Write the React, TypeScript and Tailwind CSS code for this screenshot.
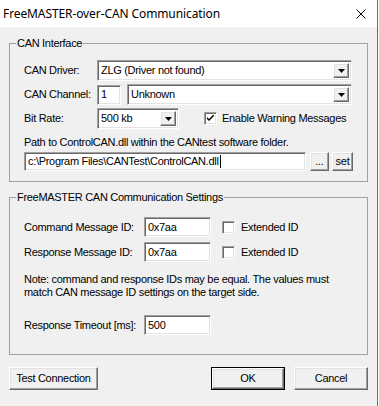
import React from "react";

const ui = "font-['Liberation_Sans',Arial,sans-serif] text-[11px] leading-[13px] tracking-[-0.3px] text-black";

const sunken =
  "bg-white border border-t-[#a0a0a0] border-l-[#a0a0a0] border-b-white border-r-white shadow-[inset_1px_1px_0_#696969,inset_-1px_-1px_0_#e3e3e3]";

const raised =
  "bg-[#f0f0f0] border border-t-white border-l-white border-b-[#696969] border-r-[#696969] shadow-[inset_-1px_-1px_0_#a0a0a0,inset_1px_1px_0_#e3e3e3]";

function Edit({ value, className, caret }: { value: string; className: string; caret?: boolean }) {
  return (
    <div className={`${sunken} ${className} flex items-center pl-[3px] overflow-hidden whitespace-nowrap`}>
      <span>{value}</span>
      {caret && <span className="ml-px inline-block h-[13px] w-px bg-black" />}
    </div>
  );
}

function Combo({ value, className }: { value: string; className: string }) {
  return (
    <div className={`${sunken} ${className} flex items-center p-[2px]`}>
      <span className="flex-1 pl-[1px] whitespace-nowrap overflow-hidden">{value}</span>
      <span className={`${raised} flex h-full w-[16px] items-center justify-center`}>
        <svg width="7" height="4" viewBox="0 0 7 4">
          <path d="M0 0h7L3.5 4z" fill="#000" />
        </svg>
      </span>
    </div>
  );
}

function Check({ checked }: { checked?: boolean }) {
  return (
    <span className={`${sunken} flex h-[13px] w-[13px] shrink-0 items-center justify-center`}>
      {checked && (
        <svg width="7" height="7" viewBox="0 0 7 7">
          <path d="M0 2v2l2 2 5-5V-1L2 4z" fill="#000" />
        </svg>
      )}
    </span>
  );
}

function Button({ label, className, isDefault }: { label: string; className: string; isDefault?: boolean }) {
  const btn = (
    <div className={`${raised} flex h-full w-full items-center justify-center`}>{label}</div>
  );
  return (
    <div className={`${className} h-[23px]`}>
      {isDefault ? <div className="h-full w-full border border-black">{btn}</div> : btn}
    </div>
  );
}

function Group({ title, children, className }: { title: string; children: React.ReactNode; className?: string }) {
  return (
    <fieldset className={`mx-[9px] w-[359px] border border-[#a0a0a0] ${className ?? ""}`}>
      <legend className="ml-[6px] px-[1px] leading-[13px]">{title}</legend>
      <div className="px-[14px]">{children}</div>
    </fieldset>
  );
}

export default function App() {
  return (
    <div className={`${ui} flex h-[406px] w-[378px] flex-col border-r border-[#1883d7] bg-[#f0f0f0]`}>
      <div className="flex h-[27px] items-center bg-white pl-[3px] pr-[11px]">
        <span className="font-['Noto_Sans',sans-serif] text-[12px] tracking-[-0.1px] flex-1">
          FreeMASTER-over-CAN Communication
        </span>
        <svg width="10" height="10" viewBox="0 0 10 10">
          <path d="M0.5 0.5l9 9M9.5 0.5l-9 9" stroke="#000" strokeWidth="1" />
        </svg>
      </div>

      <Group title="CAN Interface" className="mt-[10px] pb-[10px]">
        <div className="mt-[10px] flex h-[21px] items-center">
          <span className="w-[73px]">CAN Driver:</span>
          <Combo value="ZLG (Driver not found)" className="h-[21px] w-[255px]" />
        </div>
        <div className="mt-[3px] flex h-[21px] items-center">
          <span className="w-[73px]">CAN Channel:</span>
          <Edit value="1" className="h-[20px] w-[24px]" />
          <Combo value="Unknown" className="ml-[6px] h-[21px] w-[225px]" />
        </div>
        <div className="mt-[3px] flex h-[21px] items-center">
          <span className="w-[73px]">Bit Rate:</span>
          <Combo value="500 kb" className="h-[21px] w-[82px]" />
          <span className="ml-[25px]">
            <Check checked />
          </span>
          <span className="ml-[5px]">Enable Warning Messages</span>
        </div>
        <p className="mt-[7px]">Path to ControlCAN.dll within the CANtest software folder.</p>
        <div className="mt-[3px] flex h-[19px]">
          <Edit value="c:\Program Files\CANTest\ControlCAN.dll" caret className="h-[19px] w-[282px]" />
          <Button label="..." className="ml-[4px] w-[19px] !h-[19px]" />
          <Button label="set" className="ml-[3px] w-[21px] !h-[19px]" />
        </div>
      </Group>

      <Group title="FreeMASTER CAN Communication Settings" className="mt-[9px] pb-[19px]">
        <div className="mt-[13px] flex h-[20px] items-center">
          <span className="w-[120px]">Command Message ID:</span>
          <Edit value="0x7aa" className="h-[20px] w-[67px]" />
          <span className="ml-[11px]">
            <Check />
          </span>
          <span className="ml-[6px]">Extended ID</span>
        </div>
        <div className="mt-[5px] flex h-[20px] items-center">
          <span className="w-[120px]">Response Message ID:</span>
          <Edit value="0x7aa" className="h-[20px] w-[67px]" />
          <span className="ml-[11px]">
            <Check />
          </span>
          <span className="ml-[6px]">Extended ID</span>
        </div>
        <p className="mt-[11px]">
          Note: command and response IDs may be equal. The values must
          <br />
          match CAN message ID settings on the target side.
        </p>
        <div className="mt-[16px] flex h-[20px] items-center">
          <span className="w-[120px]">Response Timeout [ms]:</span>
          <Edit value="500" className="h-[20px] w-[67px]" />
        </div>
      </Group>

      <div className="mt-[12px] flex px-[9px]">
        <Button label="Test Connection" className="w-[90px]" />
        <Button label="OK" isDefault className="ml-[113px] w-[75px]" />
        <Button label="Cancel" className="ml-[9px] w-[75px]" />
      </div>
    </div>
  );
}
